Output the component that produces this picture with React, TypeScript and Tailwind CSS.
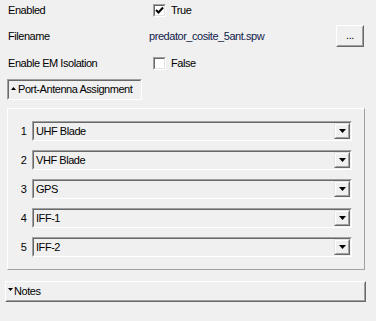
import React from 'react';

const ports = ['UHF Blade', 'VHF Blade', 'GPS', 'IFF-1', 'IFF-2'];

const CheckBox: React.FC<{ checked: boolean }> = ({ checked }) => (
  <div className="w-[13px] h-[13px] border border-t-[#a0a0a0] border-l-[#a0a0a0] border-b-white border-r-white">
    <div className="w-full h-full bg-white border border-t-[#696969] border-l-[#696969] border-b-[#e3e3e3] border-r-[#e3e3e3] flex items-center justify-center">
      {checked && (
        <svg width="9" height="9" viewBox="0 0 9 9">
          <path d="M1 4 L3.5 6.5 L8 1.5" stroke="#000" strokeWidth="2" fill="none" />
        </svg>
      )}
    </div>
  </div>
);

const ComboBox: React.FC<{ value: string }> = ({ value }) => (
  <div className="flex-1 h-[20px] border border-t-[#a0a0a0] border-l-[#a0a0a0] border-b-white border-r-white">
    <div className="h-full flex items-center border border-t-[#696969] border-l-[#696969] border-b-[#f0f0f0] border-r-[#f0f0f0]">
      <span className="flex-1 pl-[2px] text-black">{value}</span>
      <div className="w-[16px] h-[16px] border border-t-[#e3e3e3] border-l-[#e3e3e3] border-b-[#696969] border-r-[#696969]">
        <div className="w-full h-full flex items-center justify-center border border-t-white border-l-white border-b-[#a0a0a0] border-r-[#a0a0a0]">
          <svg width="7" height="4" viewBox="0 0 7 4">
            <path d="M0 0 H7 L3.5 4 Z" fill="#000" />
          </svg>
        </div>
      </div>
    </div>
  </div>
);

export default function App() {
  return (
    <div
      className="w-[376px] h-[321px] bg-[#f0f0f0] text-[11px] tracking-[-0.45px] whitespace-nowrap text-black overflow-hidden"
      style={{ fontFamily: '"Liberation Sans", Arial, sans-serif' }}
    >
      <div className="flex flex-col">
        <div className="h-[20px] flex items-center">
          <span className="w-[153px] pl-[8px]">Enabled</span>
          <CheckBox checked />
          <span className="ml-[5px]">True</span>
        </div>
        <div className="h-[22px] mt-[5px] flex items-center">
          <span className="w-[149px] pl-[8px]">Filename</span>
          <span className="flex-1 text-[#10204a]">predator_cosite_5ant.spw</span>
          <div className="w-[28px] h-[22px] mr-[12px] border border-t-white border-l-white border-b-[#696969] border-r-[#696969]">
            <div className="w-full h-full flex items-center justify-center border border-t-[#f0f0f0] border-l-[#f0f0f0] border-b-[#a0a0a0] border-r-[#a0a0a0] pb-[2px]">
              ...
            </div>
          </div>
        </div>
        <div className="h-[20px] mt-[6px] flex items-center">
          <span className="w-[153px] pl-[8px]">Enable EM Isolation</span>
          <CheckBox checked={false} />
          <span className="ml-[5px]">False</span>
        </div>

        <div className="ml-[7px] mt-[6px] w-[135px] h-[21px] border border-t-[#a0a0a0] border-l-[#a0a0a0] border-b-white border-r-white">
          <div className="h-full flex items-center border border-t-[#696969] border-l-[#696969] border-b-[#f0f0f0] border-r-[#f0f0f0] pl-[2px]">
            <svg width="5" height="3" viewBox="0 0 5 3" className="mr-[2px] mb-[3px]">
              <path d="M0 3 H5 L2.5 0 Z" fill="#000" />
            </svg>
            <span>Port-Antenna Assignment</span>
          </div>
        </div>

        <div className="ml-[7px] mt-[8px] w-[358px] h-[162px] border border-t-white border-l-white border-b-[#a0a0a0] border-r-[#a0a0a0] pt-[12px] pl-[7px] pr-[12px] flex flex-col gap-[9px]">
          {ports.map((p, i) => (
            <div key={p} className="flex items-center">
              <span className="w-[17px] text-center">{i + 1}</span>
              <ComboBox value={p} />
            </div>
          ))}
        </div>

        <div className="ml-[5px] mt-[11px] w-[361px] h-[21px] border border-t-white border-l-white border-b-[#696969] border-r-[#696969]">
          <div className="h-full flex items-center border border-t-[#f0f0f0] border-l-[#f0f0f0] border-b-[#a0a0a0] border-r-[#a0a0a0] pl-[1px]">
            <svg width="5" height="3" viewBox="0 0 5 3" className="mr-[1px] mb-[4px]">
              <path d="M0 0 H5 L2.5 3 Z" fill="#000" />
            </svg>
            <span>Notes</span>
          </div>
        </div>
      </div>
    </div>
  );
}
